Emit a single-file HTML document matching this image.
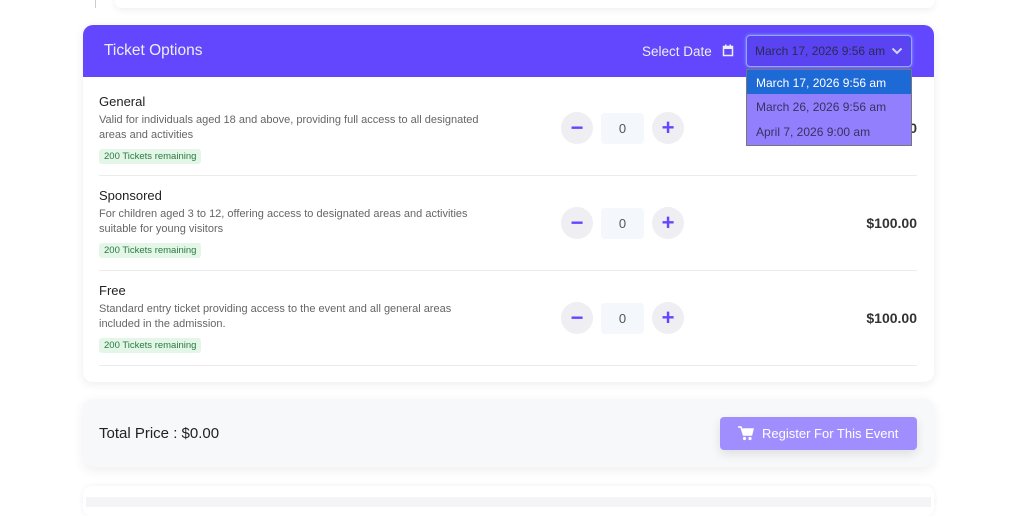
<!DOCTYPE html>
<html><head><style>
*{margin:0;padding:0;box-sizing:border-box}
body{width:1024px;height:505px;background:#fff;font-family:"Liberation Sans",sans-serif;position:relative;overflow:hidden;color:#222}
.abs{position:absolute}
.card{left:83px;top:25px;width:851px;height:357px;border-radius:10px;background:#fff;box-shadow:0 2px 10px rgba(0,0,0,.08);overflow:hidden}
.hdr{left:0;top:0;width:851px;height:52px;background:#6247fe}
.title{font-size:13px;color:#222}
.desc{font-size:11px;color:#666;line-height:15px;width:385px}
.badge{font-size:9.5px;color:#2a7a3f;background:#e3f6e8;padding:2px 5px;border-radius:3px}
.circ{width:32px;height:32px;border-radius:50%;background:#eeeef3;color:#6247fe;font-size:22px;font-weight:bold;text-align:center;line-height:31px}
.inp{width:43px;height:31px;background:#f4f7fc;border-radius:4px;font-size:13px;color:#555;text-align:center;line-height:31px}
.price{font-size:14px;font-weight:bold;color:#333;text-align:right;width:100px}
.sep{left:16px;width:818px;height:1px;background:#ececec}
</style></head><body>
<div class="abs" style="left:95px;top:0;width:1px;height:8px;background:#ccc"></div>
<div class="abs" style="left:115px;top:-5px;width:819px;height:13px;background:#fff;border-radius:6px;box-shadow:0 2px 8px rgba(0,0,0,.07)"></div>

<div class="abs card">
<div class="abs hdr"></div>
<div class="abs" style="left:21px;top:17px;font-size:15.5px;color:#eee">Ticket Options</div>
<div class="abs" style="left:559px;top:19px;font-size:13.5px;color:#eee">Select Date</div>
<svg class="abs" style="left:639px;top:19px" width="12" height="13" viewBox="0 0 12 13"><rect x="1.5" y="2.5" width="9" height="9" fill="none" stroke="#eee" stroke-width="1.5"/><rect x="1.5" y="2.5" width="9" height="2.5" fill="#eee"/><rect x="3" y="0.5" width="1.5" height="3" fill="#eee"/><rect x="7.5" y="0.5" width="1.5" height="3" fill="#eee"/></svg>
<div class="abs" style="left:663px;top:10px;width:166px;height:32px;border:1px solid #8fa8ff;border-radius:4px;background:#5a44f2;box-shadow:0 0 3px #8fa8ff"></div>
<div class="abs" style="left:672px;top:19px;font-size:12px;color:#2a2a55">March 17, 2026 9:56 am</div>
<svg class="abs" style="left:808px;top:22px" width="12" height="8" viewBox="0 0 12 8"><path d="M1.5 1.5L6 6l4.5-4.5" fill="none" stroke="#cfd3ff" stroke-width="2"/></svg>

<div class="abs title" style="left:16px;top:69px">General</div>
<div class="abs desc" style="left:16px;top:88px">Valid for individuals aged 18 and above, providing full access to all designated areas and activities</div>
<div class="abs badge" style="left:16px;top:124px">200 Tickets remaining</div>
<div class="abs circ" style="left:478px;top:87px">−</div><div class="abs inp" style="left:518px;top:88px">0</div><div class="abs circ" style="left:569px;top:87px">+</div>
<div class="abs price" style="left:734px;top:95px">$100.00</div>
<div class="abs sep" style="top:150px"></div>

<div class="abs title" style="left:16px;top:163px">Sponsored</div>
<div class="abs desc" style="left:16px;top:182px">For children aged 3 to 12, offering access to designated areas and activities suitable for young visitors</div>
<div class="abs badge" style="left:16px;top:218px">200 Tickets remaining</div>
<div class="abs circ" style="left:478px;top:182px">−</div><div class="abs inp" style="left:518px;top:183px">0</div><div class="abs circ" style="left:569px;top:182px">+</div>
<div class="abs price" style="left:734px;top:190px">$100.00</div>
<div class="abs sep" style="top:245px"></div>

<div class="abs title" style="left:16px;top:258px">Free</div>
<div class="abs desc" style="left:16px;top:277px;width:370px">Standard entry ticket providing access to the event and all general areas included in the admission.</div>
<div class="abs badge" style="left:16px;top:313px">200 Tickets remaining</div>
<div class="abs circ" style="left:478px;top:277px">−</div><div class="abs inp" style="left:518px;top:278px">0</div><div class="abs circ" style="left:569px;top:277px">+</div>
<div class="abs price" style="left:734px;top:285px">$100.00</div>
<div class="abs sep" style="top:340px"></div>
</div>

<div class="abs" style="left:746px;top:69px;width:166px;height:77px;background:#927ffe;border:1px solid #777;font-size:12px;color:#3a3060">
<div style="height:24px;background:#1d6ad6;color:#fff;padding:6px 9px">March 17, 2026 9:56 am</div>
<div style="height:26px;padding:6px 9px">March 26, 2026 9:56 am</div>
<div style="height:25px;padding:5px 9px">April 7, 2026 9:00 am</div>
</div>

<div class="abs" style="left:83px;top:399px;width:851px;height:68px;background:#f7f8fa;border-radius:10px;box-shadow:0 3px 12px rgba(0,0,0,.07)"></div>
<div class="abs" style="left:99px;top:425px;font-size:15px;color:#222">Total Price : $0.00</div>
<div class="abs" style="left:720px;top:417px;width:197px;height:33px;background:#a18efe;border-radius:4px;box-shadow:0 4px 10px rgba(0,0,0,.1);color:#fff;font-size:13px;line-height:33px;padding-left:42px">Register For This Event</div>
<svg class="abs" style="left:738px;top:426px" width="16" height="15" viewBox="0 0 16 15"><path d="M0 1h3l2.5 8h8L15 3H4.5" fill="#fff" stroke="#fff" stroke-width="1.5"/><circle cx="6.5" cy="12.5" r="1.6" fill="#fff"/><circle cx="12" cy="12.5" r="1.6" fill="#fff"/></svg>

<div class="abs" style="left:83px;top:486px;width:851px;height:30px;background:#fff;border-radius:8px;box-shadow:0 0 6px rgba(0,0,0,.06)"></div>
<div class="abs" style="left:86px;top:497px;width:845px;height:10px;background:#f4f4f6"></div>
</body></html>
